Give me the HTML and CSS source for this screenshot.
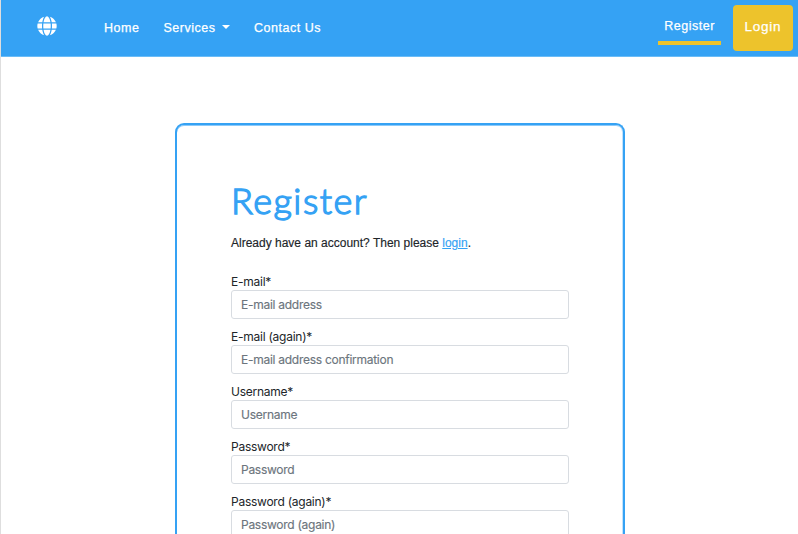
FILE: index.html
```html
<!DOCTYPE html>
<html lang="en">
<head>
<meta charset="utf-8">
<title>Register</title>
<link rel="stylesheet" href="styles.css">
</head>
<body>
<header class="navbar">
  <a class="brand" aria-label="Home page">
    <svg width="20" height="20" viewBox="0 0 496 512" fill="#fff"><path d="M336.5 160C322 70.700 287.800 8 248 8s-74 62.700-88.500 152h177zM152 256c0 22.200 1.200 43.500 3.300 64h185.300c2.100-20.500 3.300-41.800 3.300-64s-1.200-43.500-3.300-64H155.300c-2.100 20.500-3.300 41.800-3.300 64zm324.700-96c-28.600-67.900-86.500-120.400-158-141.600 24.400 33.800 41.200 84.700 50 141.600h108zM177.200 18.400C105.800 39.600 47.800 92.100 19.300 160h108c8.700-56.900 25.500-107.800 49.900-141.600zM487.400 192H372.700c2.100 21 3.300 42.500 3.300 64s-1.200 43-3.300 64h114.600c5.500-20.500 8.600-41.800 8.600-64s-3.100-43.500-8.500-64zM120 256c0-21.500 1.200-43 3.300-64H8.600C3.200 212.500 0 233.800 0 256s3.200 43.500 8.600 64h114.600c-2-21-3.200-42.500-3.200-64zm39.500 96c14.500 89.300 48.700 152 88.500 152s74-62.700 88.500-152h-177zm159.300 141.600c71.400-21.200 129.400-73.700 158-141.600h-108c-8.800 56.900-25.600 107.800-50 141.600zM19.300 352c28.600 67.900 86.500 120.400 158 141.600-24.400-33.800-41.200-84.700-50-141.600h-108z"/></svg>
  </a>
  <nav class="menu">
    <a class="nav-link">Home</a>
    <a class="nav-link">Services<span class="caret"></span></a>
    <a class="nav-link">Contact Us</a>
  </nav>
  <a class="register">Register</a>
  <a class="login">Login</a>
</header>
<main class="page">
  <section class="card">
    <h1>Register</h1>
    <p class="hint">Already have an account? Then please <a class="link">login</a>.</p>
    <form class="form">
      <label class="field"><span class="label">E-mail*</span><input placeholder="E-mail address"></label>
      <label class="field"><span class="label">E-mail (again)*</span><input placeholder="E-mail address confirmation"></label>
      <label class="field"><span class="label">Username*</span><input placeholder="Username"></label>
      <label class="field"><span class="label">Password*</span><input placeholder="Password"></label>
      <label class="field"><span class="label">Password (again)*</span><input placeholder="Password (again)"></label>
    </form>
  </section>
</main>
</body>
</html>
```
FILE: styles.css
```css
* { box-sizing: border-box; }
html, body { height: 100%; }
body {
  display: flex;
  flex-direction: column;
  margin: 0;
  overflow: hidden;
  background: #fff;
  border-left: 1px solid #dedede;
  color: #212529;
  font: 12px/18px Inter, "Liberation Sans", sans-serif;
}
.navbar {
  display: flex;
  flex: none;
  align-items: flex-start;
  height: 57px;
  padding-right: 5px;
  background: #35a2f4;
  border-bottom: 1px solid #6abcf7;
  color: #fff;
  font: 12.5px/18px "Liberation Sans", sans-serif;
  letter-spacing: .52px;
  -webkit-text-stroke: .25px #fff;
}
.brand { display: flex; margin: 16px 0 0 36px; }
.menu { display: flex; gap: 24px; margin: 19px auto 0 47px; }
.caret {
  display: inline-block;
  margin-left: 6.5px;
  vertical-align: 3px;
  border: 4px solid transparent;
  border-top-color: #fff;
  border-bottom: 0;
}
.register {
  width: 63px;
  height: 45px;
  padding-top: 17px;
  border-bottom: 4px solid #edc32c;
  text-align: center;
}
.login {
  width: 60px;
  height: 46px;
  margin: 5px 0 0 12px;
  border-radius: 4px;
  background: #edc32c;
  font-size: 13.5px;
  letter-spacing: .75px;
  line-height: 44px;
  text-align: center;
}
.page {
  display: flex;
  flex: 1;
  justify-content: center;
  min-height: 0;
  padding: 66px 0 0 1px;
  overflow: hidden;
}
.card {
  width: 450px;
  padding: 51px 54px 0;
  border: 2px solid #35a2f4;
  border-bottom: 0;
  border-radius: 9px 9px 0 0;
  box-shadow: inset -1px 0 #c2e2fc, inset 0 1px #8ccafa;
  overflow: hidden;
}
h1 {
  margin: 0;
  color: #35a2f4;
  font: 300 36px/48px Lato, sans-serif;
  letter-spacing: 1.5px;
  -webkit-text-stroke: 1.4px #35a2f4;
  stroke-linejoin: round;
}
.hint {
  margin: 10px 0 21px;
  font-family: "Liberation Sans", sans-serif;
  -webkit-text-stroke: .15px;
}
.link { color: #35a2f4; text-decoration: underline; }
.form { display: flex; flex-direction: column; gap: 8px; }
.field { display: block; height: 47px; }
.label { display: block; height: 17px; letter-spacing: -.25px; }
input {
  display: block;
  width: 338px;
  height: 29px;
  padding: 0 9px;
  border: 1px solid #d8dce1;
  border-radius: 3px;
  font: inherit;
  letter-spacing: -.27px;
}
input::placeholder { color: #6c757d; opacity: 1; -webkit-text-stroke: .15px; }
```
